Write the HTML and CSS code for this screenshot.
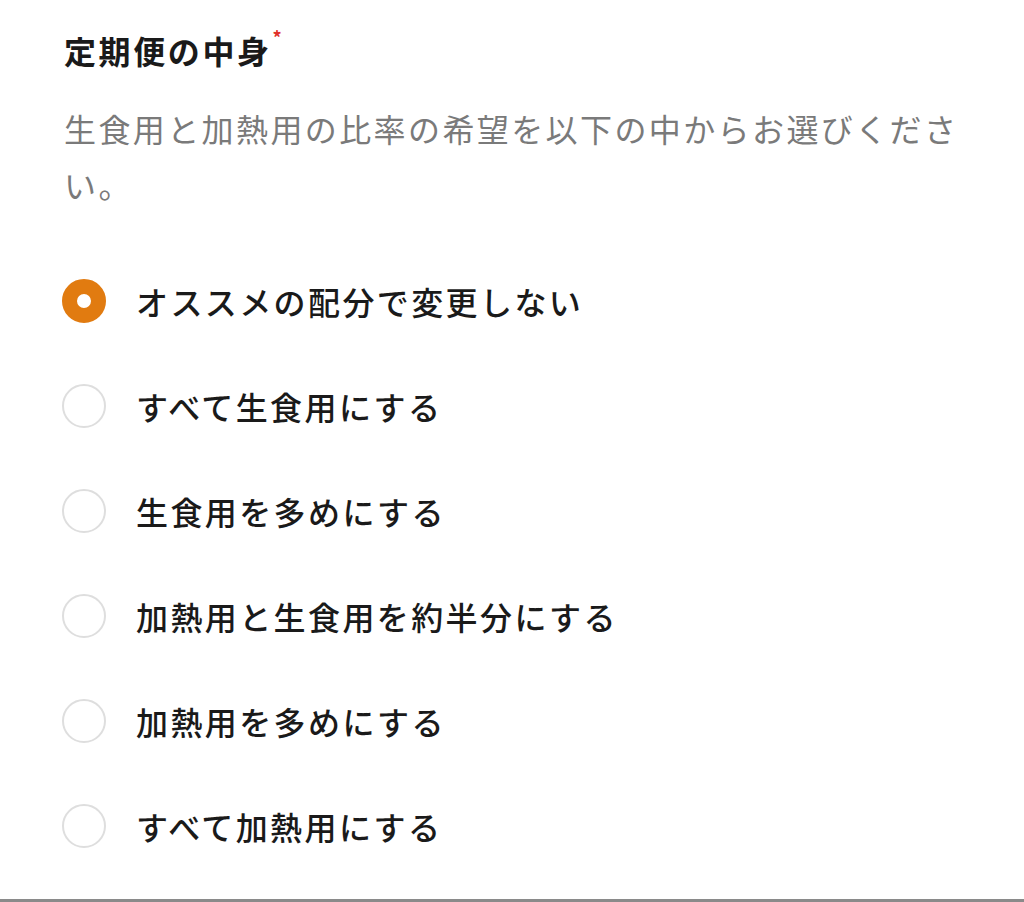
FILE: index.html
```html
<!DOCTYPE html>
<html lang="ja">
<head>
    <meta charset="UTF-8">
    <title>定期便の中身</title>
    <link rel="stylesheet" href="styles.css">
</head>
<body>
    <div class="container">
        <h2 class="question-title">定期便の中身<span class="required">*</span></h2>
        <p class="question-help">生食用と加熱用の比率の希望を以下の中からお選びください。</p>

        <div class="options">
            <label class="option">
                <input type="radio" name="content" checked>
                <span class="radio"></span>
                <span class="option-label">オススメの配分で変更しない</span>
            </label>
            <label class="option">
                <input type="radio" name="content">
                <span class="radio"></span>
                <span class="option-label">すべて生食用にする</span>
            </label>
            <label class="option">
                <input type="radio" name="content">
                <span class="radio"></span>
                <span class="option-label">生食用を多めにする</span>
            </label>
            <label class="option">
                <input type="radio" name="content">
                <span class="radio"></span>
                <span class="option-label">加熱用と生食用を約半分にする</span>
            </label>
            <label class="option">
                <input type="radio" name="content">
                <span class="radio"></span>
                <span class="option-label">加熱用を多めにする</span>
            </label>
            <label class="option">
                <input type="radio" name="content">
                <span class="radio"></span>
                <span class="option-label">すべて加熱用にする</span>
            </label>
        </div>
    </div>
</body>
</html>
```

FILE: styles.css
```css
html, body {
    height: 100%;
}

body {
    margin: 0;
    background: #fff;
    font-family: "Noto Sans CJK JP", "Noto Sans", sans-serif;
    color: #1a1a1a;
    box-sizing: border-box;
    border-bottom: 3px solid #8a8a8a;
}

.container {
    padding: 22px 60px 0 64px;
}

.question-title {
    margin: 0;
    font-size: 32px;
    font-weight: 700;
    letter-spacing: 2.6px;
    line-height: 56px;
}

.required {
    color: #e0302a;
    font-size: 18px;
    vertical-align: top;
    line-height: 30px;
    margin-left: 1px;
}

.question-help {
    margin: 22px 0 0;
    font-size: 32px;
    letter-spacing: 2.4px;
    line-height: 56px;
    color: #7a7a7a;
}

.options {
    margin-top: 59px;
    display: flex;
    flex-direction: column;
    gap: 45px;
}

.option {
    display: flex;
    align-items: center;
    gap: 30px;
    cursor: pointer;
}

.option input {
    display: none;
}

.radio {
    width: 44px;
    height: 44px;
    box-sizing: border-box;
    border: 2px solid #dedede;
    border-radius: 50%;
    flex-shrink: 0;
    margin-left: -2px;
}

.option input:checked + .radio {
    border: 15px solid #e17b10;
}

.option-label {
    font-size: 32px;
    font-weight: 500;
    letter-spacing: 2.4px;
    line-height: 60px;
}
```
